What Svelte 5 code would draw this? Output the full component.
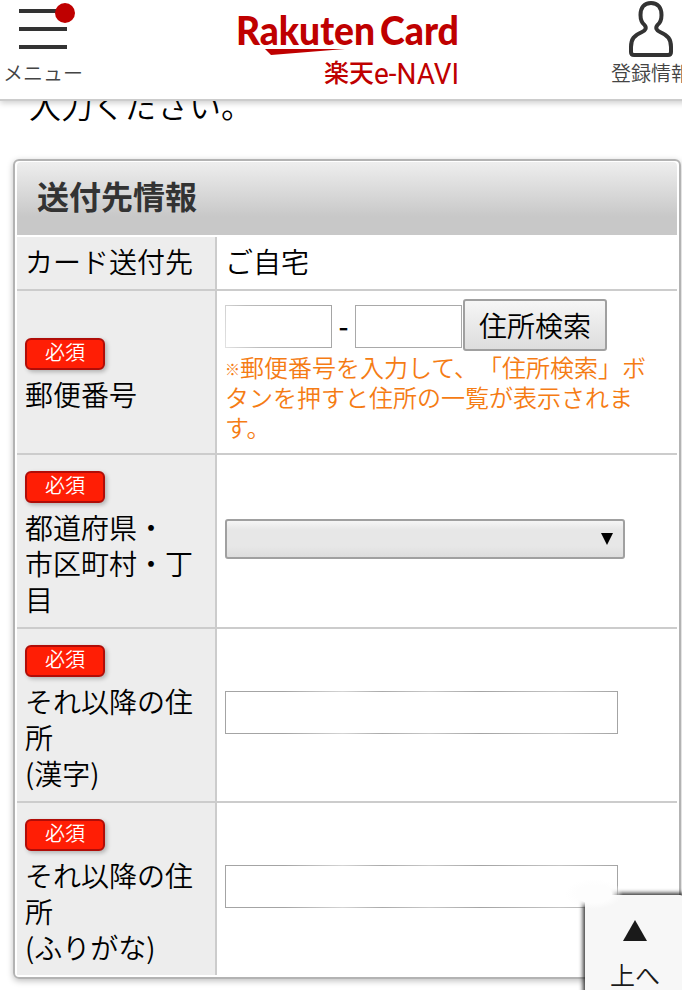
<script lang="ts">
	type Field = {
		label: string[];
		required: boolean;
		kind: 'text' | 'zip' | 'select' | 'input';
		height: number;
	};

	const fields: Field[] = [
		{ label: ['カード送付先'], required: false, kind: 'text', height: 54 },
		{ label: ['郵便番号'], required: true, kind: 'zip', height: 164 },
		{ label: ['都道府県・', '市区町村・丁', '目'], required: true, kind: 'select', height: 174 },
		{ label: ['それ以降の住', '所', '(漢字)'], required: true, kind: 'input', height: 174 },
		{ label: ['それ以降の住', '所', '(ふりがな)'], required: true, kind: 'input', height: 172 }
	];
</script>

<div class="page">
	<header>
		<button class="nav menu" type="button">
			<svg width="80" height="56" viewBox="0 0 80 56">
				<path d="M16 11H64M16 29H64M16 47H64" stroke="#333" stroke-width="4" />
				<circle cx="62" cy="13" r="10" fill="#bf0000" />
			</svg>
			<span>メニュー</span>
		</button>

		<svg class="logo" width="232" height="90" viewBox="0 0 232 90">
			<text class="brand" x="4" y="45" textLength="139" lengthAdjust="spacingAndGlyphs">Rakuten</text>
			<text class="brand" x="148" y="45" textLength="79" lengthAdjust="spacingAndGlyphs">Card</text>
			<path d="M33 49H113L39 55Z" fill="#bf0000" />
			<text class="navi-ja" x="92" y="82" textLength="50">楽天</text>
			<text class="navi" x="142" y="83.500" textLength="85" lengthAdjust="spacingAndGlyphs">e-NAVI</text>
		</svg>

		<button class="nav account" type="button">
			<svg width="80" height="58" viewBox="0 0 80 58">
				<path
					d="M40 3C33 3 29.500 8 29.500 15C29.500 20 31 23 33.500 25C36 28 34.500 30.500 31 32C23 35.500 20 39 20 47V52Q20 55 23 55H57Q60 55 60 52V47C60 39 57 35.500 49 32C45.500 30.500 44 28 46.500 25C49 23 50.500 20 50.500 15C50.500 8 47 3 40 3Z"
					fill="none"
					stroke="#333"
					stroke-width="4"
				/>
			</svg>
			<span>登録情報</span>
		</button>
	</header>

	<main>
		<p class="intro">入力ください。</p>

		<section class="card">
			<h2>送付先情報</h2>
			{#each fields as field}
				<div class="row" style="height: {field.height}px">
					<div class="label">
						{#if field.required}
							<span class="required">必須</span>
						{/if}
						{#each field.label as line}
							<span class="line">{line}</span>
						{/each}
					</div>
					<div class="value {field.kind}">
						{#if field.kind === 'text'}
							<span>ご自宅</span>
						{:else if field.kind === 'zip'}
							<div class="zip-line">
								<input class="code" type="text" aria-label="郵便番号" />
								<span class="dash">-</span>
								<input class="code" type="text" aria-label="郵便番号" />
								<button class="search" type="button">住所検索</button>
							</div>
							<p class="note"><span class="mark">※</span>郵便番号を入力して、「住所検索」ボ<br />タンを押すと住所の一覧が表示されま<br />す。</p>
						{:else if field.kind === 'select'}
							<div class="dropdown">
								<svg width="12" height="12" viewBox="0 0 12 12"><path d="M0 0H12L6 12Z" /></svg>
							</div>
						{:else}
							<input class="wide" type="text" aria-label={field.label.join('')} />
						{/if}
					</div>
				</div>
			{/each}
		</section>
	</main>

	<button class="to-top" type="button">
		<svg width="24" height="21" viewBox="0 0 24 21"><path d="M12 0L24 21H0Z" fill="#1a1a1a" /></svg>
		<span>上へ</span>
	</button>
</div>

<style>
	:global(body) {
		margin: 0;
		background: #fff;
	}

	.page {
		position: relative;
		width: 682px;
		height: 990px;
		overflow: hidden;
		background: #fff;
		color: #000;
		font-family: 'Noto Sans CJK JP', sans-serif;
		font-size: 28px;
		font-weight: 350;
		line-height: 36px;
		text-spacing-trim: space-all;
	}

	button,
	input {
		box-sizing: border-box;
		margin: 0;
		padding: 0;
		font: inherit;
		color: inherit;
	}

	svg {
		display: block;
	}

	header {
		position: relative;
		z-index: 1;
		box-sizing: border-box;
		display: flex;
		width: 691px;
		height: 101px;
		padding-left: 3px;
		border-bottom: 2px solid #ccc;
		background: #fff;
		box-shadow: 0 2px 6px rgba(0, 0, 0, 0.2);
	}

	.nav {
		width: 80px;
		height: 99px;
		border: 0;
		background: none;
		color: #444;
		font-size: 20px;
		line-height: 30px;
		display: flex;
		flex-direction: column;
	}

	.nav span {
		margin-top: 2px;
		white-space: nowrap;
	}

	.account span {
		margin-top: 0;
	}

	.logo {
		margin-left: 149px;
	}

	.brand {
		font-family: Lato, sans-serif;
		font-size: 39px;
		font-weight: 900;
		fill: #bf0000;
	}

	.navi-ja {
		font-size: 25px;
		font-weight: 500;
		fill: #bf0000;
	}

	.navi {
		font-family: Roboto, sans-serif;
		font-size: 30px;
		font-weight: 400;
		fill: #bf0000;
	}

	.account {
		margin-left: auto;
	}

	main {
		padding: 0 1px 0 13px;
	}

	.intro {
		height: 36px;
		margin: -15px 0 37px 16px;
		font-size: 32px;
	}

	.card {
		box-sizing: border-box;
		width: 668px;
		height: 820px;
		padding: 1px 2px 2px;
		border: 2px solid #b3b3b3;
		border-radius: 6px;
		box-shadow: 0 2px 6px rgba(0, 0, 0, 0.25);
	}

	h2 {
		box-sizing: border-box;
		height: 73px;
		margin: 0 0 2px;
		padding: 12px 0 0 20px;
		border-radius: 4px 4px 0 0;
		background: linear-gradient(#eee, #c8c8c8 75%);
		color: #333;
		font-size: 32px;
		font-weight: 700;
		line-height: 42px;
	}

	.row {
		box-sizing: border-box;
		display: flex;
		border-bottom: 2px solid #ccc;
	}

	.row:last-child {
		border-bottom: 0;
	}

	.label {
		box-sizing: border-box;
		width: 200px;
		padding-left: 8px;
		border-right: 2px solid #ccc;
		background: #ededed;
		display: flex;
		flex-direction: column;
		justify-content: center;
	}

	.line {
		display: block;
		white-space: nowrap;
	}

	.line:first-child {
		margin-top: -5px;
	}

	.required {
		box-sizing: border-box;
		width: 80px;
		height: 32px;
		margin: 5px 0 6px;
		border: 2px solid #b00d08;
		border-radius: 6px;
		background: #ff1e05;
		box-shadow: 2px 2px 4px rgba(0, 0, 0, 0.25);
		color: #fff;
		font-size: 20px;
		line-height: 24px;
		text-align: center;
	}

	.value {
		flex: 1;
		padding-left: 8px;
		display: flex;
		flex-direction: column;
		justify-content: center;
		white-space: nowrap;
	}

	.value.text {
		padding-bottom: 5px;
	}

	.value.zip {
		padding-bottom: 2px;
	}

	.value.select {
		padding-bottom: 4px;
	}

	input {
		border: 1px solid #a9a9a9;
		border-radius: 0;
		background: #fff;
		outline: none;
	}

	.zip-line {
		display: flex;
		align-items: center;
	}

	.code {
		width: 107px;
		height: 43px;
		margin-top: 4px;
	}

	.code:first-child {
		border-image: linear-gradient(70deg, #e2e2e2, #bbb 30%, #a4a4a4) 1;
	}

	.dash {
		width: 23px;
		font-weight: 500;
		text-align: center;
	}

	.search {
		width: 144px;
		height: 52px;
		margin: 0 0 0 1px;
		border: 2px solid #a0a0a0;
		border-radius: 3px;
		background: linear-gradient(#f6f6f6, #ddd);
	}

	.note {
		margin: 1px 0 2px;
		color: #f57c14;
		font-size: 24px;
		line-height: 30px;
	}

	.mark {
		font-size: 15px;
		line-height: 1;
		font-weight: 700;
		vertical-align: 2px;
	}

	.dropdown {
		box-sizing: border-box;
		width: 400px;
		height: 40px;
		padding-right: 10px;
		border: 2px solid #a0a0a0;
		border-radius: 3px;
		background: linear-gradient(#f6f6f6, #e7e7e7 25%, #e7e7e7 70%, #ddd);
		display: flex;
		align-items: center;
		justify-content: flex-end;
	}

	.wide {
		width: 393px;
		height: 43px;
		margin-bottom: 6px;
		border-image: linear-gradient(90deg, #a4a4a4 15%, #d4d4d4 30%, #aaa 40%, #c8c8c8 52%, #a4a4a4 65%, #c4c4c4 85%, #a4a4a4) 1;
	}

	/* fixed "back to top" tab, cut off by the screen edge */
	.to-top {
		position: absolute;
		z-index: 2;
		left: 585px;
		top: 895px;
		width: 100px;
		height: 110px;
		padding-top: 25px;
		border: 0;
		border-radius: 5px;
		background: #f7f7f7;
		box-shadow: 0 0 4px 2px rgba(0, 0, 0, 0.8);
		color: #1a1a1a;
		font-size: 25px;
		display: flex;
		flex-direction: column;
		align-items: center;
	}

	/* light patch over the tab's top left corner */
	.to-top::before {
		content: '';
		position: absolute;
		left: -20px;
		top: -16px;
		width: 58px;
		height: 30px;
		background: radial-gradient(closest-side, #fdfdfd 60%, transparent);
	}

	.to-top span {
		margin-top: 15px;
	}
</style>
